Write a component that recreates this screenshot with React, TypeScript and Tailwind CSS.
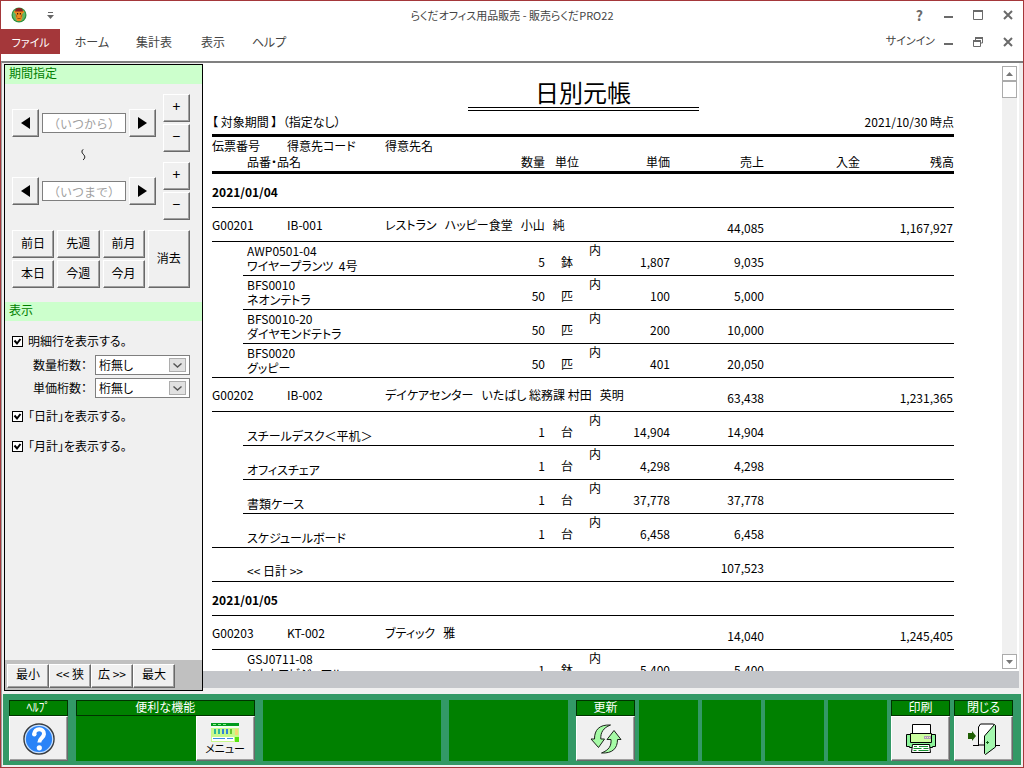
import React, { useState } from "react";

type Item = { code: string; name: string; qty: string; unit: string; price: string; sales: string };
type Slip = { id: string; customerCode: string; customer: string; sales: string; balance: string; items: Item[] };
type Day = { date: string; slips: Slip[]; total: string };

const days: Day[] = [
  {
    date: "2021/01/04",
    total: "107,523",
    slips: [
      {
        id: "G00201",
        customerCode: "IB-001",
        customer: "レストラン   ハッピー食堂   小山   純",
        sales: "44,085",
        balance: "1,167,927",
        items: [
          { code: "AWP0501-04", name: "ワイヤープランツ  4号", qty: "5", unit: "鉢", price: "1,807", sales: "9,035" },
          { code: "BFS0010", name: "ネオンテトラ", qty: "50", unit: "匹", price: "100", sales: "5,000" },
          { code: "BFS0010-20", name: "ダイヤモンドテトラ", qty: "50", unit: "匹", price: "200", sales: "10,000" },
          { code: "BFS0020", name: "グッピー", qty: "50", unit: "匹", price: "401", sales: "20,050" },
        ],
      },
      {
        id: "G00202",
        customerCode: "IB-002",
        customer: "デイケアセンター   いたばし 総務課 村田   英明",
        sales: "63,438",
        balance: "1,231,365",
        items: [
          { code: "", name: "スチールデスク＜平机＞", qty: "1", unit: "台", price: "14,904", sales: "14,904" },
          { code: "", name: "オフィスチェア", qty: "1", unit: "台", price: "4,298", sales: "4,298" },
          { code: "", name: "書類ケース", qty: "1", unit: "台", price: "37,778", sales: "37,778" },
          { code: "", name: "スケジュールボード", qty: "1", unit: "台", price: "6,458", sales: "6,458" },
        ],
      },
    ],
  },
  {
    date: "2021/01/05",
    total: "",
    slips: [
      {
        id: "G00203",
        customerCode: "KT-002",
        customer: "ブティック   雅",
        sales: "14,040",
        balance: "1,245,405",
        items: [
          { code: "GSJ0711-08", name: "トウカワビジュアル", qty: "1", unit: "鉢", price: "5,400", sales: "5,400" },
        ],
      },
    ],
  },
];

const bevel =
  "flex items-center justify-center bg-[#f0f0f0] border border-t-white border-l-white border-b-[#696969] border-r-[#696969] shadow-[inset_-1px_-1px_0_#a0a0a0]";

function Bevel({ className, label, children }: { className: string; label?: string; children: React.ReactNode }) {
  return (
    <button type="button" aria-label={label} className={`${bevel} ${className}`}>
      {children}
    </button>
  );
}

function Triangle({ left }: { left?: boolean }) {
  return (
    <svg width="9" height="12" viewBox="0 0 9 12" aria-hidden="true">
      <path d={left ? "M9 0v12L0 6z" : "M0 0v12l9-6z"} fill="#000" />
    </svg>
  );
}

function CloseIcon() {
  return (
    <svg width="10" height="10" viewBox="0 0 10 10" aria-hidden="true">
      <path d="M1 1l8 8M9 1L1 9" stroke="#6a6a6a" strokeWidth="2" />
    </svg>
  );
}

function MinimizeIcon() {
  return (
    <svg width="10" height="10" viewBox="0 0 10 10" aria-hidden="true">
      <path d="M1 6h9v2H1z" fill="#6a6a6a" />
    </svg>
  );
}

function MaximizeIcon() {
  return (
    <svg width="10" height="10" viewBox="0 0 10 10" aria-hidden="true">
      <path d="M.5 1v8.500h9V1" fill="none" stroke="#6a6a6a" />
      <path d="M0 0h10v2H0z" fill="#6a6a6a" />
    </svg>
  );
}

function RestoreIcon() {
  return (
    <svg width="10" height="10" viewBox="0 0 10 10" aria-hidden="true">
      <path d="M2.500 3V1h7v5H8M.500 4v5.500h7V4z" fill="none" stroke="#6a6a6a" />
      <path d="M2 0h8v2H2zM0 3h8v2H0z" fill="#6a6a6a" />
    </svg>
  );
}

function AppLogo() {
  return (
    <svg width="16" height="16" viewBox="0 0 16 16" aria-hidden="true">
      <circle cx="8" cy="8" r="7.500" fill="#2f8f3a" />
      <circle cx="8" cy="8" r="6.300" fill="#5fb868" />
      <path d="M2.500 4.500l2.500-1h6l2.500 1-1.500 2-1 .5.5 3-1.500 4H6L4.500 10 5 7 4 6.500z" fill="#ef8a1d" />
      <path d="M4.500 2.500C6.500.6 9.500.6 11.500 2.500l.5 2H4z" fill="#8e2020" />
      <path d="M6 6h1.200v1.500H6zM8.800 6H10v1.500H8.800zM6.700 11h.8v1h-.8zM8.500 11h.8v1h-.8z" fill="#3a1c08" />
      <path d="M5 7.500l1 3M11 7.500l-1 3" stroke="#a8540c" strokeWidth=".8" />
    </svg>
  );
}

function HelpIcon() {
  return (
    <svg width="32" height="32" viewBox="0 0 32 32" aria-hidden="true">
      <circle cx="16" cy="16" r="15" fill="#2a83f7" stroke="#3c3c3c" strokeWidth="1.500" />
      <circle cx="16" cy="16" r="13.700" fill="none" stroke="#cfe2f8" strokeWidth="1.200" />
      <path d="M11.200 11.500C11 4.500 21.500 4.800 21 11c-.3 4-4.700 4-4.700 8.500" fill="none" stroke="#fff" strokeWidth="4" />
      <circle cx="11.300" cy="11.200" r="2.200" fill="#fff" />
      <circle cx="16.300" cy="24.800" r="2.600" fill="#fff" />
    </svg>
  );
}

function MenuIcon() {
  return (
    <svg width="28" height="19" viewBox="0 0 28 19" aria-hidden="true">
      <path d="M0 0h28v19H0z" fill="#c8fa8c" />
      <path d="M0 0h28v3H0z" fill="#009a1c" />
      <path d="M2 1h3v1H2zM7 1h3v1H7zM12 1h3v1h-3z" fill="#8df08d" />
      <path d="M0 3h28v2H0z" fill="#f4fff0" />
      <path d="M3 6h2v5H3zM7 6h2v5H7z" fill="#2cb89c" />
      <path d="M11 6h2v5h-2zM15 6h2v5h-2z" fill="#3485d8" />
      <path d="M19 6h2v5h-2z" fill="#63c930" />
      <path d="M24 6h3v6h-3z" fill="#f5d875" />
      <path d="M1 14h22v4H1z" fill="#fff" />
      <path d="M2 15h12v1H2zM16 15h6v1h-6z" fill="#3c8de0" />
      <path d="M24 14h4v5h-4z" fill="#56e310" />
    </svg>
  );
}

function RefreshIcon() {
  return (
    <svg width="32" height="30" viewBox="0 0 32 30" aria-hidden="true">
      <g fill="#a6fba6" stroke="#1c241c" strokeLinejoin="round">
        <path d="M20.500 1C9 .5 4.500 6 4.500 15H1l7.500 8.500L14.500 15h-3.700C10.500 8.500 13 4 20.500 1z" />
        <path d="M11.500 29c11 .5 16-4.500 16-13.500h3.500L24 6.500 17 15.500h4C21.500 22 19 26 11.500 29z" />
      </g>
    </svg>
  );
}

function PrinterIcon() {
  return (
    <svg width="32" height="29" viewBox="0 0 32 29" aria-hidden="true" stroke="#000">
      <path d="M7.500 10V.5h18V10" fill="#fff" />
      <path d="M1.500 10.500h29v12h-3v1h-23v-1h-3z" fill="#8df49a" />
      <path d="M5.500 9.500h21v9h-21z" fill="#ccffa0" />
      <path d="M19 12h7v3h-7z" fill="#a9a0b5" stroke="none" />
      <path d="M20 13h1v1h-1zM22 13h1v1h-1zM24 13h1v1h-1z" fill="#ffd6cc" stroke="none" />
      <path d="M7.500 20.500h17l1 8h-19z" fill="#fff" />
      <path d="M9 22.500h3m2 0h9M8.500 24.500h8m2 0h5M8.500 26.500h3m2 0h10" stroke="#189030" />
    </svg>
  );
}

function DoorIcon() {
  return (
    <svg width="33" height="32" viewBox="0 0 33 32" aria-hidden="true">
      <path d="M11.500 22V4l2-3h13l2 3" fill="#fff" stroke="#000" />
      <path d="M11.500 22h6M28 22.500h5M6 22.500h6" stroke="#000" />
      <path d="M17.500 13L27.500 1.500l1 1V24L18.500 31.500l-1-1z" fill="#a4f8ae" stroke="#000" />
      <path d="M19 19.500h3M20.500 18v3" stroke="#16601c" />
      <path d="M1 10h4V8l4 5-4 5v-2H1z" fill="#205f05" />
    </svg>
  );
}

function PeriodField({ label, placeholder }: { label: string; placeholder: string }) {
  return (
    <div className="flex items-center gap-[7px]">
      <div className="flex flex-1 items-center gap-[3px]">
        <Bevel className="h-7 w-[27px]" label={`${label} 前へ`}><Triangle left /></Bevel>
        <input
          aria-label={label}
          placeholder={placeholder}
          className="h-5 w-0 flex-1 border border-[#7f7f7f] bg-white text-center [font-feature-settings:normal] placeholder:text-[#a0a0a0]"
        />
        <Bevel className="h-7 w-[27px]" label={`${label} 次へ`}><Triangle /></Bevel>
      </div>
      <div className="flex flex-col gap-0.5">
        <Bevel className="h-7 w-[27px] pb-1 text-[14px]">+</Bevel>
        <Bevel className="h-7 w-[27px] pb-1 text-[14px]">−</Bevel>
      </div>
    </div>
  );
}

function Check({ text }: { text: string }) {
  const [on, setOn] = useState(true);
  return (
    <label className="flex h-4 items-center gap-[5px]">
      <span className="grid">
        <input
          type="checkbox"
          checked={on}
          onChange={() => setOn(!on)}
          className="col-start-1 row-start-1 h-[11px] w-[11px] appearance-none border border-black bg-white"
        />
        {on && (
          <svg width="11" height="11" viewBox="0 0 11 11" className="pointer-events-none col-start-1 row-start-1" aria-hidden="true">
            <path d="M2.500 4.500l2.500 3 3.500-4.500" fill="none" stroke="#000" strokeWidth="2" />
          </svg>
        )}
      </span>
      {text}
    </label>
  );
}

function DigitsSelect({ id, text }: { id: string; text: string }) {
  return (
    <div className="flex items-center justify-end gap-2">
      <label htmlFor={id}>{text}</label>
      <div className="grid w-[95px]">
        <select id={id} className="col-start-1 row-start-1 h-5 appearance-none border border-[#7f7f7f] bg-white pl-[3px] text-[12px]">
          <option>桁無し</option>
        </select>
        <span className="pointer-events-none col-start-1 row-start-1 mr-1 flex h-3.5 w-[17px] items-center justify-center self-center justify-self-end border border-[#adadad] bg-[#e1e1e1]">
          <svg width="9" height="5" viewBox="0 0 9 5" aria-hidden="true">
            <path d="M.5.5l4 3.500 4-3.500" fill="none" stroke="#555" strokeWidth="1.400" />
          </svg>
        </span>
      </div>
    </div>
  );
}

function SectionTitle({ children }: { children: React.ReactNode }) {
  return <h2 className="h-[19px] bg-[#ccffcc] pl-1 leading-4 text-[#008000]">{children}</h2>;
}

function Sidebar() {
  return (
    <aside className="flex w-[199px] shrink-0 flex-col border border-black bg-[#f0f0f0]">
      <SectionTitle>期間指定</SectionTitle>
      <div className="flex flex-col pt-2.5 pr-3 pl-[7px]">
        <PeriodField label="開始日" placeholder="（いつから）" />
        <div className="flex h-2.5 items-center pl-[69px]">
          <svg width="5" height="16" viewBox="0 0 5 16" className="shrink-0" aria-hidden="true">
            <path d="M2.500 0C0 2 1 4 2.500 5.500S4.500 9 2 11" fill="none" stroke="#000" />
          </svg>
        </div>
        <PeriodField label="終了日" placeholder="（いつまで）" />
        <div className="mt-2.5 grid grid-cols-4 grid-rows-2 gap-x-[3px] gap-y-0.5">
          <Bevel className="h-7 pb-0.5">前日</Bevel>
          <Bevel className="h-7 pb-0.5">先週</Bevel>
          <Bevel className="h-7 pb-0.5">前月</Bevel>
          <Bevel className="row-span-2 pb-0.5">消去</Bevel>
          <Bevel className="h-7 pb-0.5">本日</Bevel>
          <Bevel className="h-7 pb-0.5">今週</Bevel>
          <Bevel className="h-7 pb-0.5">今月</Bevel>
        </div>
      </div>
      <div className="h-3.5" />
      <SectionTitle>表示</SectionTitle>
      <div className="flex flex-1 flex-col pt-3 pr-3 pl-[7px]">
        <Check text="明細行を表示する。" />
        <div className="mt-1.5 mb-2.5 flex flex-col gap-[3px]">
          <DigitsSelect id="qty-digits" text="数量桁数：" />
          <DigitsSelect id="price-digits" text="単価桁数：" />
        </div>
        <Check text="「日計」を表示する。" />
        <div className="h-3.5" />
        <Check text="「月計」を表示する。" />
      </div>
      <div className="flex h-[30px] items-start bg-[#c0c0c0] pt-1 pl-0.5">
        <Bevel className="h-6 w-[42px] pb-1">最小</Bevel>
        <Bevel className="h-6 w-[42px] pb-1">&lt;&lt; 狭</Bevel>
        <Bevel className="h-6 w-[42px] pb-1">広 &gt;&gt;</Bevel>
        <Bevel className="h-6 w-[42px] pb-1">最大</Bevel>
      </div>
    </aside>
  );
}

function ItemRow({ item, last }: { item: Item; last: boolean }) {
  return (
    <tr className="h-[34px] [&>td]:border-b [&>td]:border-black">
      <td className={last ? "" : "border-b-0!"} />
      <td colSpan={3} className="pb-0.5 pl-1 align-bottom leading-[15px] whitespace-pre">
        <div>{item.code}</div>
        <div>{item.name}</div>
      </td>
      <td className="pt-1.5 text-right">{item.qty}</td>
      <td className="pt-1.5 pl-4">{item.unit}</td>
      <td className="align-top leading-4">内</td>
      <td className="pt-1.5 text-right">{item.price}</td>
      <td className="pt-1.5 text-right">{item.sales}</td>
      <td />
      <td />
    </tr>
  );
}

function SlipRows({ slip }: { slip: Slip }) {
  return (
    <>
      <tr className="h-[34px] [&>td]:border-b [&>td]:border-black">
        <td colSpan={2}>{slip.id}</td>
        <td>{slip.customerCode}</td>
        <td colSpan={5} className="whitespace-pre">{slip.customer}</td>
        <td className="pt-1.5 text-right">{slip.sales}</td>
        <td />
        <td className="pt-1.5 pr-px text-right">{slip.balance}</td>
      </tr>
      {slip.items.map((item, i) => (
        <ItemRow key={item.name} item={item} last={i === slip.items.length - 1} />
      ))}
    </>
  );
}

function Report() {
  return (
    <main className="flex min-w-0 flex-1 flex-col">
      <div className="flex min-h-0 flex-1 bg-white">
        <div className="min-w-0 flex-1 overflow-hidden pr-12 pl-[9px]">
          <div className="flex justify-center pt-3.5">
            <h1 className="w-[231px] border-b-4 border-double border-black text-center text-[24px] leading-[30px]">日別元帳</h1>
          </div>
          <div className="flex h-[23px] items-center justify-between pb-0.5">
            <span className="whitespace-pre">【 対象期間 】  （指定なし）</span>
            <span>2021/10/30 時点</span>
          </div>
          <table className="w-full table-fixed border-separate border-spacing-0 text-left">
            <colgroup>
              <col className="w-[31px]" />
              <col className="w-[44px]" />
              <col className="w-[98px]" />
              <col />
              <col className="w-[30px]" />
              <col className="w-[44px]" />
              <col className="w-[20px]" />
              <col className="w-[61px]" />
              <col className="w-[94px]" />
              <col className="w-[96px]" />
              <col className="w-[94px]" />
            </colgroup>
            <thead className="[&_th]:font-normal">
              <tr className="h-[21px] [&>th]:border-t-[3px] [&>th]:border-black">
                <th colSpan={2} className="leading-4">伝票番号</th>
                <th className="leading-4">得意先コード</th>
                <th colSpan={8} className="leading-4">得意先名</th>
              </tr>
              <tr className="h-[19px] leading-[14px] [&>th]:border-b-[3px] [&>th]:border-black [&>th]:align-top">
                <th />
                <th colSpan={3} className="pl-1">品番・品名</th>
                <th className="text-right">数量</th>
                <th className="pl-2.5">単位</th>
                <th />
                <th className="text-right">単価</th>
                <th className="text-right">売上</th>
                <th className="text-right">入金</th>
                <th className="text-right">残高</th>
              </tr>
            </thead>
            <tbody>
              {days.map((day) => (
                <React.Fragment key={day.date}>
                  <tr className="h-[34px]">
                    <td colSpan={11} className="border-b border-black pt-0.5 font-bold">{day.date}</td>
                  </tr>
                  {day.slips.map((slip) => (
                    <SlipRows key={slip.id} slip={slip} />
                  ))}
                  {day.total && (
                    <tr className="h-[34px] [&>td]:border-b [&>td]:border-black">
                      <td />
                      <td colSpan={7} className="pt-3 pl-1">&lt;&lt; 日計 &gt;&gt;</td>
                      <td className="pt-1.5 text-right">{day.total}</td>
                      <td colSpan={2} />
                    </tr>
                  )}
                </React.Fragment>
              ))}
            </tbody>
          </table>
        </div>
        <div className="mt-[3px] mr-0.5 mb-0.5 flex w-[15px] flex-col bg-[#f0f0f0]">
          <button type="button" aria-label="上へ" className="flex h-[15px] items-center justify-center border border-[#ababab] bg-white">
            <svg width="7" height="4" viewBox="0 0 7 4" aria-hidden="true"><path d="M0 4l3.500-4L7 4z" fill="#777" /></svg>
          </button>
          <div className="h-[17px] border border-[#ababab] bg-white" />
          <div className="flex-1" />
          <button type="button" aria-label="下へ" className="flex h-[15px] items-center justify-center border border-[#ababab] bg-white">
            <svg width="7" height="4" viewBox="0 0 7 4" aria-hidden="true"><path d="M0 0h7L3.500 4z" fill="#777" /></svg>
          </button>
        </div>
      </div>
      <div className="mb-[3px] h-[17px] bg-[#c4c6ca]" />
    </main>
  );
}

function TileLabel({ children }: { children: React.ReactNode }) {
  return <div className="h-4 border border-[#003300] bg-[#008000] text-center leading-3 text-white">{children}</div>;
}

function Tile({ label, children }: { label: string; children: React.ReactNode }) {
  return (
    <div className="flex w-[59px] shrink-0 flex-col">
      <TileLabel>{label}</TileLabel>
      <Bevel className="flex-1" label={label}>{children}</Bevel>
    </div>
  );
}

function Toolbar() {
  return (
    <footer className="mr-0.5 mb-0.5 ml-px flex h-[71px] justify-between gap-2 bg-[#339966] pt-1.5 pr-2 pb-1 pl-1.5">
      <div className="flex flex-1 gap-2">
        <Tile label="ﾍﾙﾌﾟ"><HelpIcon /></Tile>
        <div className="flex flex-[3] flex-col bg-[#008000]">
          <TileLabel>便利な機能</TileLabel>
          <button type="button" className={`${bevel} w-[59px] flex-1 flex-col self-end text-[11px] leading-3`}>
            <MenuIcon />
            メニュー
          </button>
        </div>
        <div className="flex-[3] bg-[#008000]" />
        <div className="flex-[2] bg-[#008000]" />
      </div>
      <div className="flex gap-1">
        <Tile label="更新"><RefreshIcon /></Tile>
        <div className="w-[59px] bg-[#008000]" />
        <div className="w-[59px] bg-[#008000]" />
        <div className="w-[59px] bg-[#008000]" />
        <div className="w-[59px] bg-[#008000]" />
        <Tile label="印刷"><PrinterIcon /></Tile>
        <Tile label="閉じる"><DoorIcon /></Tile>
      </div>
    </footer>
  );
}

export default function App() {
  return (
    <div className="flex h-screen flex-col overflow-hidden border border-[#a4373a] bg-white font-['Noto_Sans_CJK_JP',sans-serif] text-[12px] leading-4 text-black [font-feature-settings:'palt']">
      <header className="text-[#444]">
        <div className="grid h-7 grid-cols-[1fr_auto_1fr] items-center">
          <div className="flex items-center gap-5 pl-2.5">
            <AppLogo />
            <button type="button" aria-label="クイックアクセス">
              <svg width="7" height="7" viewBox="0 0 7 7" aria-hidden="true"><path d="M1 0h5v1H1zM0 3h7L3.500 7z" fill="#666" /></svg>
            </button>
          </div>
          <h1 className="text-[11px]">らくだオフィス用品販売 - 販売らくだPRO22</h1>
          <div className="flex items-center justify-end gap-5 pr-2.5">
            <button type="button" className="text-[14px] font-bold text-[#6a6a6a]">?</button>
            <button type="button" aria-label="最小化"><MinimizeIcon /></button>
            <button type="button" aria-label="最大化"><MaximizeIcon /></button>
            <button type="button" aria-label="閉じる"><CloseIcon /></button>
          </div>
        </div>
        <nav className="flex h-[25px] items-center">
          <button type="button" className="h-full w-[59px] bg-[#a4373a] text-[11px] text-white">ファイル</button>
          <button type="button" className="w-16">ホーム</button>
          <button type="button" className="w-[60px]">集計表</button>
          <button type="button" className="w-[58px]">表示</button>
          <button type="button" className="w-[54px]">ヘルプ</button>
          <div className="ml-auto flex items-center gap-5 pr-2.5">
            <button type="button" className="-mr-3 pb-1 text-[11px]">サインイン</button>
            <button type="button" aria-label="ウィンドウの最小化"><MinimizeIcon /></button>
            <button type="button" aria-label="元に戻す"><RestoreIcon /></button>
            <button type="button" aria-label="ウィンドウを閉じる"><CloseIcon /></button>
          </div>
        </nav>
      </header>
      <div className="mt-[7px] flex min-h-0 flex-1 flex-col border-t-2 border-l border-t-[#808080] border-l-[#a0a0a0] bg-[#f0f0f0]">
        <div className="flex min-h-0 flex-1 pr-1 pb-[3px]">
          <div className="flex pt-px pl-0.5">
            <Sidebar />
          </div>
          <Report />
        </div>
        <Toolbar />
      </div>
    </div>
  );
}
